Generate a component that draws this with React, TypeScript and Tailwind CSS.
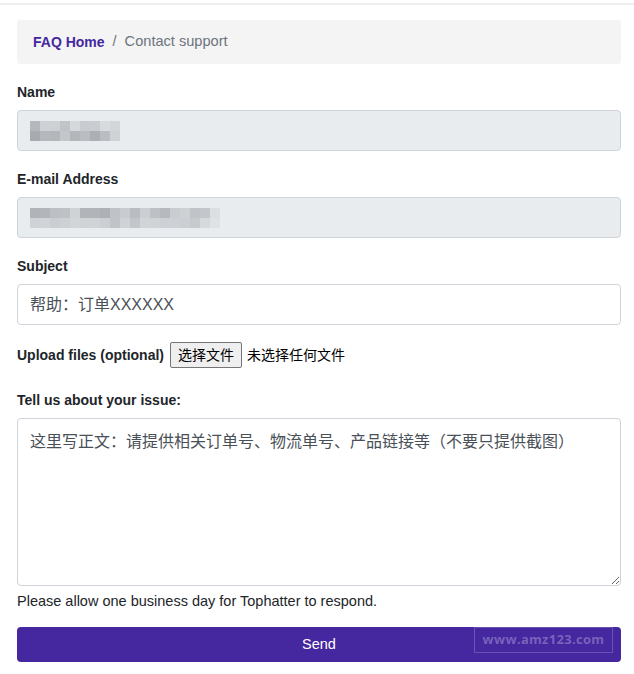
import React from "react";

const nameRow1 = ["#b4b8bc", "#ced2d6", "#cdd1d4", "#c0c4c8", "#d6d9dc", "#c8ccd0", "#c9cdd1", "#d8dbde", "#d3d6d9"];
const nameRow2 = ["#a7abaf", "#b5b9bd", "#b3b7bb", "#c3c7ca", "#b3b7bb", "#b9bdc1", "#acb0b4", "#babec2", "#d0d3d6"];
const mailRow1 = ["#b0b4b8", "#b2b6ba", "#bcc0c4", "#bdc1c5", "#cfd3d6", "#b1b5b9", "#b1b5b9", "#adb1b5", "#bfc3c7", "#c8ccd0", "#b9bdc1", "#cbcfd2", "#bdc1c5", "#b6babe", "#c9cdd1", "#cdd1d4", "#c0c4c8", "#c3c7ca", "#dcdfe2"];
const mailRow2 = ["#cfd2d6", "#d1d4d7", "#cacdd1", "#cdd0d4", "#d2d5d8", "#d0d3d6", "#d1d4d7", "#cbced2", "#c0c4c8", "#d0d3d6", "#c2c6ca", "#d2d5d8", "#d1d4d7", "#cdd0d4", "#cdd0d4", "#cbced2", "#c6cacd", "#d6d9dc", "#dfe2e5"];

function Pixels({ r1, r2 }: { r1: string[]; r2: string[] }) {
  return (
    <div className="flex flex-col">
      <div className="flex">
        {r1.map((c, i) => (
          <div key={i} className="w-[10px] h-[10px]" style={{ background: c }} />
        ))}
      </div>
      <div className="flex">
        {r2.map((c, i) => (
          <div key={i} className="w-[10px] h-[10px]" style={{ background: c }} />
        ))}
      </div>
    </div>
  );
}

export default function App() {
  const font = { fontFamily: '"Liberation Sans", "Noto Sans CJK SC", Arial, sans-serif' };
  return (
    <div className="w-[634px] h-[674px] bg-white text-[#212529] overflow-hidden" style={font}>
      <div className="mt-[3px] h-[2px] bg-[#efefef]" />
      <div className="pl-[17px] pr-[13px] pt-[15px]">
        <div className="h-[44px] bg-[#f4f4f4] rounded-[3px] flex items-center px-[16px] text-[14px]">
          <span className="font-bold text-[#4527a0]">FAQ Home</span>
          <span className="text-[#6c757d] px-[8px] text-[14.5px]">/</span>
          <span className="text-[#6c757d] text-[14.6px]">Contact support</span>
        </div>

        <div className="mt-[18px] text-[14px] font-bold leading-[21px]">Name</div>
        <div className="mt-[7px] h-[41px] bg-[#e9ecef] border border-[#ced4da] rounded-[4px] flex items-center pl-[12px]">
          <Pixels r1={nameRow1} r2={nameRow2} />
        </div>

        <div className="mt-[18px] text-[14px] font-bold leading-[21px]">E-mail Address</div>
        <div className="mt-[7px] h-[41px] bg-[#e9ecef] border border-[#ced4da] rounded-[4px] flex items-center pl-[12px]">
          <Pixels r1={mailRow1} r2={mailRow2} />
        </div>

        <div className="mt-[18px] text-[14px] font-bold leading-[21px]">Subject</div>
        <div className="mt-[7px] h-[41px] bg-white border border-[#ced4da] rounded-[4px] flex items-center pl-[12px] text-[16px] text-[#495057]">
          帮助：订单XXXXXX
        </div>

        <div className="mt-[17px] h-[26px] flex items-center text-[14px]">
          <span className="font-bold">Upload files (optional)</span>
          <span className="ml-[6px] h-[26px] px-[7px] flex items-center bg-[#efefef] border border-[#767676] rounded-[2px] text-[14px] text-black">
            选择文件
          </span>
          <span className="ml-[5px] text-black">未选择任何文件</span>
        </div>

        <div className="mt-[22px] text-[14px] font-bold leading-[21px]">Tell us about your issue:</div>
        <textarea
          readOnly
          className="mt-[7px] block w-full h-[168px] border border-[#ced4da] rounded-[4px] px-[12px] py-[11px] text-[16px] text-[#495057] leading-[24px] outline-none"
          style={font}
          defaultValue="这里写正文：请提供相关订单号、物流单号、产品链接等（不要只提供截图）"
        />
        <div className="mt-[5px] text-[14.5px] leading-[20px] text-[#212529]">
          Please allow one business day for Tophatter to respond.
        </div>

        <div className="relative mt-[16px] h-[35px] bg-[#4527a0] rounded-[4px] flex items-center justify-center text-white text-[14.5px]">
          Send
          <div className="absolute left-[457px] top-0 w-[139px] h-[26px] border border-[rgba(255,255,255,0.2)] flex items-center justify-center">
            <span className="text-[13px] font-bold text-[rgba(255,255,255,0.28)] tracking-[0.3px]" style={{ fontFamily: '"Open Sans", sans-serif' }}>
              www.amz123.com
            </span>
          </div>
        </div>
      </div>
    </div>
  );
}
